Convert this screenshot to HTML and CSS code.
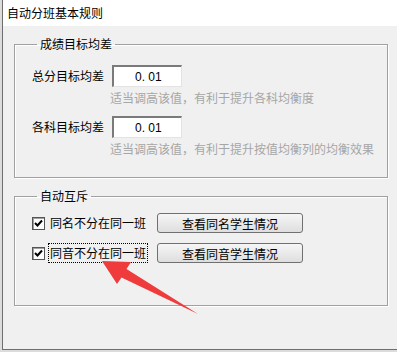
FILE: index.html
```html
<!DOCTYPE html>
<html lang="zh-CN">
<head>
    <meta charset="UTF-8">
    <title>自动分班基本规则</title>
    <link rel="stylesheet" href="styles.css">
</head>
<body>

    <div class="window">
        <!-- Title bar -->
        <div class="titlebar">自动分班基本规则</div>

        <div class="content">
            <!-- Score target deviation -->
            <fieldset class="group">
                <legend>成绩目标均差</legend>

                <div class="field">
                    <div class="field-row">
                        <span class="field-label">总分目标均差</span>
                        <input class="num-input" type="text" value="0. 01">
                    </div>
                    <div class="hint">适当调高该值，有利于提升各科均衡度</div>
                </div>

                <div class="field">
                    <div class="field-row">
                        <span class="field-label">各科目标均差</span>
                        <input class="num-input" type="text" value="0. 01">
                    </div>
                    <div class="hint">适当调高该值，有利于提升按值均衡列的均衡效果</div>
                </div>
            </fieldset>

            <!-- Mutual exclusion -->
            <fieldset class="group group-mutex">
                <legend>自动互斥</legend>

                <div class="check-row">
                    <span class="checkbox"><svg width="9" height="9" viewBox="0 0 9 9"><path d="M1 4 L3.5 6.5 L8 1.5" fill="none" stroke="#000" stroke-width="2"/></svg></span>
                    <span class="check-label">同名不分在同一班</span>
                    <button class="win-btn">查看同名学生情况</button>
                </div>

                <div class="check-row">
                    <span class="checkbox"><svg width="9" height="9" viewBox="0 0 9 9"><path d="M1 4 L3.5 6.5 L8 1.5" fill="none" stroke="#000" stroke-width="2"/></svg></span>
                    <span class="check-label focused">同音不分在同一班</span>
                    <button class="win-btn">查看同音学生情况</button>
                </div>
            </fieldset>
        </div>
    </div>

    <!-- Red annotation arrow drawn over the dialog -->
    <svg class="arrow" width="397" height="352" viewBox="0 0 397 352">
        <polygon points="102,261 131,262 126.5,269 198,314 121.5,277.5 117,284" fill="#ef3b3b"/>
    </svg>

</body>
</html>
```

FILE: styles.css
```css
/* General reset */
* {
    margin: 0;
    padding: 0;
    box-sizing: border-box;
}

body {
    width: 397px;
    height: 352px;
    overflow: hidden;
    background-color: #dcdcdc;
    font-family: "Noto Sans CJK SC", "Liberation Sans", sans-serif;
    font-size: 12px;
    color: #000;
    position: relative;
}

/* Dialog window */
.window {
    margin-left: 2px;
    height: 350px;
    background-color: #f0f0f0;
    border-left: 1px solid #6e6e6e;
    border-bottom: 1px solid #6e6e6e;
}

.titlebar {
    height: 26px;
    line-height: 26px;
    padding-left: 4px;
    background-color: #ffffff;
    font-size: 12px;
}

.content {
    padding: 0 9px 0 11px;
}

/* Group boxes */
.group {
    margin-top: 10px;
    border: 1px solid #a0a0a0;
    box-shadow: 1px 1px 0 #ffffff, inset 1px 1px 0 #ffffff;
    padding: 4px 0 20px 17px;
}
.group legend {
    margin-left: 5px;
    padding: 0 3px;
    line-height: 16px;
    font-size: 12px;
}

/* Numeric fields */
.field {
    margin-top: 9px;
}
.field + .field {
    margin-top: 10px;
}
.field-row {
    display: flex;
    align-items: center;
}
.field-label {
    width: 72px;
    line-height: 16px;
}
.num-input {
    margin-left: 8px;
    width: 70px;
    height: 22px;
    background: #ffffff;
    border-top: 2px solid #7a7a7a;
    border-left: 2px solid #7a7a7a;
    border-right: 1px solid #e3e3e3;
    border-bottom: 1px solid #e3e3e3;
    font-family: "Liberation Sans", sans-serif;
    font-size: 12px;
    padding-left: 21px;
    color: #000;
    outline: none;
}
.hint {
    margin-top: 3px;
    padding-left: 78px;
    line-height: 16px;
    color: #a6a6a6;
}

/* Mutual exclusion rows */
.group-mutex {
    padding-top: 9px;
    padding-bottom: 42px;
}
.check-row {
    display: flex;
    align-items: center;
    height: 20px;
}
.check-row + .check-row {
    margin-top: 10px;
}
.checkbox {
    width: 13px;
    height: 13px;
    background: #ffffff;
    border: 1px solid #555;
    box-shadow: inset 1px 1px 0 #a0a0a0;
    display: flex;
    align-items: center;
    justify-content: center;
}
.check-label {
    margin-left: 4px;
    padding: 0 1px;
    line-height: 18px;
}
.check-label.focused {
    outline: 1px dotted #000;
}
.win-btn {
    margin-left: 10px;
    width: 146px;
    height: 20px;
    border: 1px solid #707070;
    border-radius: 3px;
    background: linear-gradient(#f6f6f6, #dedede);
    font-family: "Noto Sans CJK SC", sans-serif;
    font-size: 12px;
    color: #000;
}

/* Annotation arrow */
.arrow {
    position: absolute;
    left: 0;
    top: 0;
}
```
